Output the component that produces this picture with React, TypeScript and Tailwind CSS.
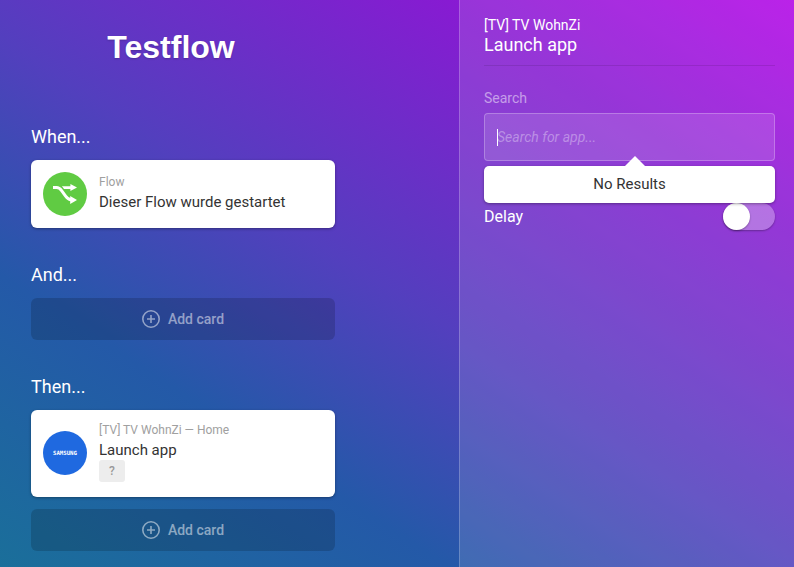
import {useState, type ReactNode} from 'react';


function AddCardButton() {
    return (
        <button type="button"
                className="flex h-[42px] w-full items-center justify-center gap-2 rounded-md bg-black/16 text-sm font-medium text-white/50">
            <svg width="18" height="18" viewBox="0 0 18 18" fill="none" stroke="currentColor" aria-hidden="true">
                <circle cx="9" cy="9" r="8.2" strokeWidth="1.6"/>
                <path d="M9 5v8M5 9h8" strokeWidth="1.6"/>
            </svg>
            Add card
        </button>
    );
}

function FlowIcon() {
    return (
        <svg width="44" height="44" viewBox="0 0 44 44" className="shrink-0" aria-hidden="true">
            <circle cx="22" cy="22" r="22" fill="#60cb43"/>
            <path d="M10 15.6h3.5c2.2 0 3.6 1 5.1 3l4 5.6c1.2 1.7 2.6 3.5 5.4 3.6" fill="none" stroke="#fff"
                  strokeWidth="3"/>
            <path d="M18.8 14.2h8.6v-2.3l6.6 3.6-6.6 3.6v-2h-6.4c-.7-1.2-1.3-2-2.2-2.9z" fill="#fff"/>
            <path d="M27.2 24l6.8 4-6.8 4z" fill="#fff"/>
        </svg>
    );
}

function SamsungIcon() {
    return (
        <svg width="44" height="44" viewBox="0 0 44 44" className="shrink-0" role="img" aria-label="Samsung">
            <circle cx="22" cy="22" r="22" fill="#1f69e0"/>
            <text x="22" y="24" textAnchor="middle" fill="#fff" fontSize="5.7" fontWeight="700"
                  fontFamily="'DejaVu Sans Mono', monospace">SAMSUNG</text>
        </svg>
    );
}

type FlowCardProps = {
    icon: ReactNode;
    source: string;
    title: string;
    argument?: string;
};

function FlowCard({icon, source, title, argument}: FlowCardProps) {
    return (
        <div className="flex min-h-[68px] items-center gap-3 rounded-md bg-white px-3 pt-[10px] pb-[11px] shadow-[0_1px_3px_rgba(0,0,0,0.35)]">
            {icon}
            <div className="min-w-0 pb-1">
                <div className="text-xs leading-5 text-[#a0a0a0]">{source}</div>
                <div className="text-[15px] leading-5 text-[#333]">{title}</div>
                {argument && (
                    <div className="w-fit rounded-[3px] bg-[#ededed] px-[10px] text-xs leading-[22px] font-medium text-[#999]">
                        {argument}
                    </div>
                )}
            </div>
        </div>
    );
}

function FlowSection({title, children}: { title: string; children: ReactNode }) {
    return (
        <section className="flex flex-col">
            <h2 className="mb-[10px] text-lg leading-[26px]">{title}</h2>
            <div className="flex flex-col gap-3">{children}</div>
        </section>
    );
}

function CardSettings() {
    const [query, setQuery] = useState('');
    const [delay, setDelay] = useState(false);

    return (
        <aside className="min-w-0 border-l border-white/20 bg-white/12 pt-4 pr-[19px] pl-6">
            <header className="border-b border-black/10 pb-[9px]">
                <div className="text-sm leading-[18px]">[TV] TV WohnZi</div>
                <div className="text-lg leading-[22px]">Launch app</div>
            </header>
            <label htmlFor="app-search" className="mt-6 block text-sm leading-4 text-white/50">Search</label>
            <div className="relative mt-[7px]">
                <input id="app-search" type="text" value={query} placeholder="Search for app..."
                       onChange={(e) => setQuery(e.target.value)}
                       className="peer block h-12 w-full rounded-sm border border-white/25 bg-white/12 px-3 text-sm text-white outline-none placeholder:text-white/35 placeholder:italic"/>
                <span className="pointer-events-none absolute top-4 left-[13px] h-[17px] w-px bg-white peer-focus:hidden"/>
            </div>
            <div className="relative mt-[5px] rounded-[5px] bg-white py-2 text-center text-[15px] leading-[21px] text-[#333] shadow-[0_1px_3px_rgba(0,0,0,0.35)]">
                <svg width="20" height="10" viewBox="0 0 20 10" fill="#fff" aria-hidden="true"
                     className="absolute bottom-full left-1/2 -ml-[5px]">
                    <path d="M0 10 10 0l10 10z"/>
                </svg>
                No Results
            </div>
            <label className="flex items-center justify-between leading-[27px]">
                Delay
                <input type="checkbox" role="switch" checked={delay}
                       onChange={(e) => setDelay(e.target.checked)}
                       className="h-[27px] w-[52px] appearance-none rounded-full bg-white/30 shadow-[0_1px_2px_rgba(0,0,0,0.3)] before:block before:size-[27px] before:rounded-full before:bg-white before:shadow-[0_1px_2px_rgba(0,0,0,0.3)] checked:before:ml-[25px]"/>
            </label>
        </aside>
    );
}

function App() {
    return (
        <div className="grid min-h-screen grid-cols-[459fr_335fr] bg-[linear-gradient(33deg,#1a6f9a_0%,#2459a8_27%,#533fbe_49%,#871bd2_79%,#b204e6_100%)] font-[Roboto,sans-serif] text-white">
            <main className="min-w-0 px-[31px] pt-7 pb-4">
                <div className="max-w-[304px]">
                    <h1 className="mr-6 text-center font-['Liberation_Sans',sans-serif] text-[32px] leading-[38px] font-bold [text-shadow:0_1px_2px_rgba(0,0,0,0.2)]">
                        Testflow
                    </h1>
                    <div className="mt-[58px] flex flex-col gap-[34px]">
                        <FlowSection title="When...">
                            <FlowCard icon={<FlowIcon/>} source="Flow" title="Dieser Flow wurde gestartet"/>
                        </FlowSection>
                        <FlowSection title="And...">
                            <AddCardButton/>
                        </FlowSection>
                        <FlowSection title="Then...">
                            <FlowCard icon={<SamsungIcon/>} source="[TV] TV WohnZi — Home" title="Launch app"
                                      argument="?"/>
                            <AddCardButton/>
                        </FlowSection>
                    </div>
                </div>
            </main>
            <CardSettings/>
        </div>
    );
}

export default App
